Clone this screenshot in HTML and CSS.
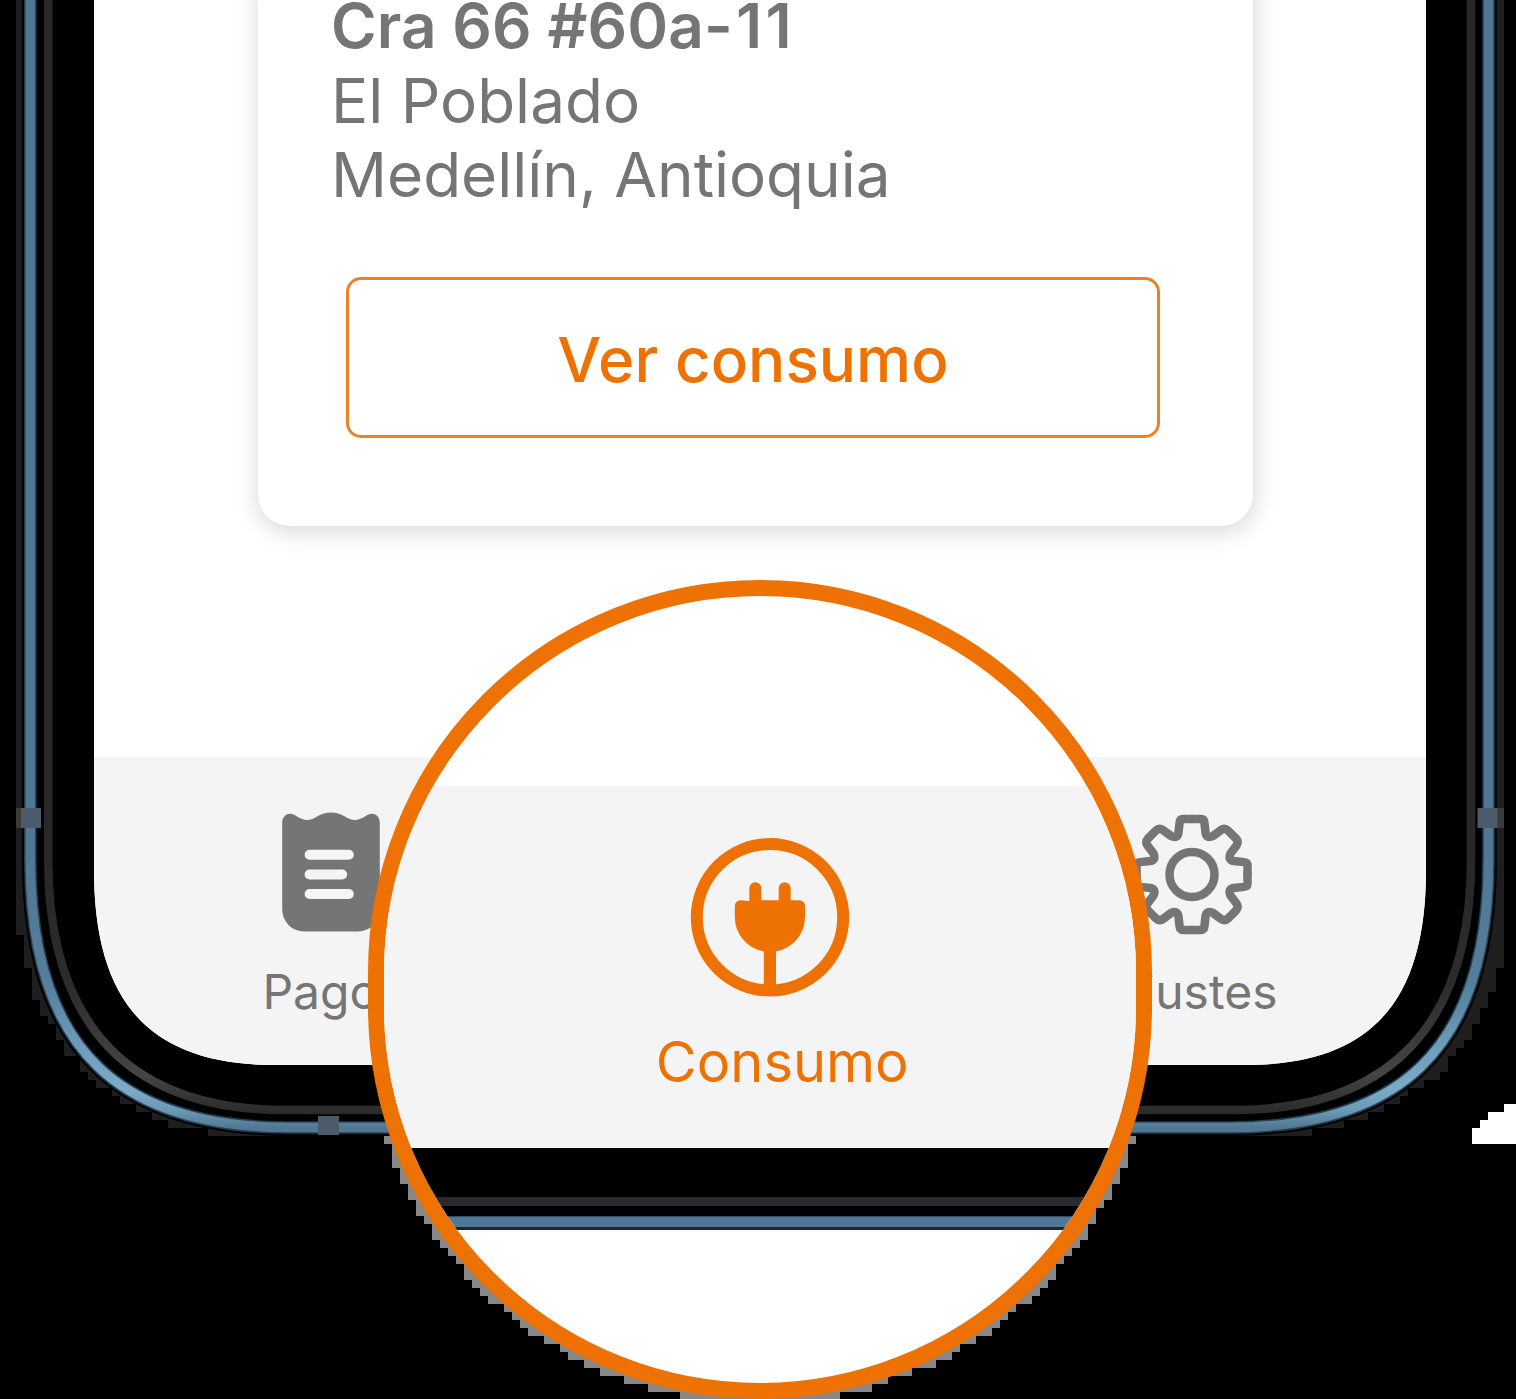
FILE: index.html
```html
<!DOCTYPE html>
<html lang="es">
<head>
  <meta charset="utf-8">
  <title>Consumo</title>
  <link rel="stylesheet" href="styles.css">
</head>
<body>
  <div class="stage">
    <svg class="frame" viewBox="0 0 1516 1399" aria-hidden="true">
      <defs>
        <linearGradient id="steel" x1="0" y1="860" x2="0" y2="1128" gradientUnits="userSpaceOnUse">
          <stop offset="0" stop-color="#507894"/>
          <stop offset=".45" stop-color="#547e9b"/>
          <stop offset=".7" stop-color="#6d9dba"/>
          <stop offset=".85" stop-color="#7babc7"/>
          <stop offset=".93" stop-color="#6c9bb8"/>
          <stop offset="1" stop-color="#507894"/>
        </linearGradient>
        <linearGradient id="rim" x1="0" y1="860" x2="0" y2="1112" gradientUnits="userSpaceOnUse">
          <stop offset="0" stop-color="#282828"/>
          <stop offset=".5" stop-color="#2c2c2c"/>
          <stop offset=".85" stop-color="#454545"/>
          <stop offset="1" stop-color="#2b2b2b"/>
        </linearGradient>
      </defs>
      <path fill="#1e1e1e" d="M16 0V935H24V968H32V1000H40V1016H48V1024H56V1040H64V1056H80V1072H88V1080H96V1088H112V1096H120V1104H136V1112H152V1120H168V1128H208V1136H1312V1128H1344V1120H1368V1112H1384V1104H1400V1096H1408V1088H1424V1080H1440V1072H1448V1056H1456V1048H1464V1040H1472V1024H1480V1008H1488V992H1496V968H1504V912V0Z"/>
      <path fill="#000" stroke="#000208" stroke-width="17" d="M30.3-20V860C30.3 1055 125 1127.500 290 1127.500H1229C1394 1127.500 1488.500 1055 1488.500 860V-20"/>
      <path fill="none" stroke="#29404f" stroke-width="12.500" d="M30.3-20V860C30.3 1055 125 1127.500 290 1127.500H1229C1394 1127.500 1488.500 1055 1488.500 860V-20"/>
      <path fill="none" stroke="url(#steel)" stroke-width="9.500" d="M30.3-20V860C30.3 1055 125 1127.500 290 1127.500H1229C1394 1127.500 1488.500 1055 1488.500 860V-20"/>
      <path fill="none" stroke="url(#rim)" stroke-width="8.500" d="M48.2-20V860C48.2 1026 131 1110 285 1110H1234C1388 1110 1471 1026 1471 860V-20"/>
      <path fill="#3a3a3a" d="M16 808H24V828H16ZM1496 808H1504V828H1496Z"/>
      <path fill="#4b5b69" d="M21 808H41V828H21ZM1477.500 808H1497.500V828H1477.500ZM318 1116H339V1135H318Z"/>
      <path fill="#888" d="M384 1136V1144H392V1168H400V1184H408V1200H416V1216H424V1224H432V1240H440V1248H448V1256H456V1264H464V1280H472V1288H480V1296H488V1304H504V1312H512V1320H520V1328H528V1336H544V1344H560V1352H568V1360H584V1368H600V1376H624V1384H648V1392H680V1399H840V1392H872V1384H888V1376H912V1368H936V1360H952V1352H960V1344H976V1336H992V1328H1000V1320H1008V1312H1016V1304H1032V1296H1040V1288H1048V1280H1056V1264H1064V1256H1072V1248H1080V1240H1088V1224H1096V1208H1104V1200H1112V1184H1120V1168H1128V1144H1136V1136Z"/>
      <path fill="#fff" d="M1516 1104H1504V1112H1488V1120H1480V1128H1472V1144H1516Z"/>
    </svg>

    <main class="screen">
      <section class="card">
        <address class="address">
          <strong class="street">Cra 66 #60a<span class="plate">-1</span>1</strong>
          <span class="district">El Poblado</span>
          <span class="city">Medellín, Antioquia</span>
        </address>
        <button class="action" type="button"><span class="action-text">Ver consumo</span></button>
      </section>

      <nav class="tabs">
        <a class="tab tab-pay">
          <svg class="tab-icon" viewBox="0 0 120 124" aria-hidden="true">
            <path fill="#757575" d="M11.200 12C11.200 4 18 .5 24.500 4.500C33 10.200 39 10.200 46 5.500C55 .3 65 .3 74 5.500C81 10.200 87 10.200 95.500 4.500C102 .5 108.800 4 108.800 12V98A22 22 0 0 1 86.800 120.500H33.200A22 22 0 0 1 11.200 98Z"/>
            <path stroke="#f5f5f5" stroke-width="10" stroke-linecap="round" d="M38.600 43.800H77.800M38.600 63.500H71.200M38.600 83H77.800"/>
          </svg>
          <span class="tab-label">Pagos</span>
        </a>
        <a class="tab tab-settings">
          <svg class="tab-icon" viewBox="-60 -63.500 120 124" aria-hidden="true">
            <defs>
              <path id="teeth" d="M0-55.500H9Q12-55.500 12.400-52L13.500-42Q14.500-35.500 21-38.500L29-44.500Q32.500-47 36-44L44-36Q47-33 44.500-29L38.500-21Q35.500-14.500 42-13.500L52-12.400Q55.500-12 55.500-9V0"/>
            </defs>
            <g fill="none" stroke="#757575" stroke-width="8.500" stroke-linecap="round">
              <circle r="22.500"/>
              <use href="#teeth"/>
              <use href="#teeth" transform="rotate(90)"/>
              <use href="#teeth" transform="rotate(180)"/>
              <use href="#teeth" transform="rotate(270)"/>
            </g>
          </svg>
          <span class="tab-label">Ajustes</span>
        </a>
      </nav>
    </main>

    <div class="lens">
      <div class="lens-tab">
        <svg class="plug" viewBox="0 0 160 160" aria-hidden="true">
          <circle cx="80" cy="80.300" r="73.200" fill="none" stroke="#ee7203" stroke-width="12"/>
          <path fill="#ee7203" d="M59.300 64V51.300a6 6 0 0 1 12 0V63.300H88.700V51.300a6 6 0 0 1 12 0V63.300H109.500a5.500 5.500 0 0 1 5.500 5.500V80A35 35 0 0 1 86 114.500V150H73.800V114.500A35 35 0 0 1 44.800 80V68.800a5.500 5.500 0 0 1 5.500-5.500Z"/>
        </svg>
        <span class="lens-label">Consumo</span>
      </div>
      <div class="lens-bezel"></div>
      <div class="lens-rim"></div>
      <div class="lens-gap"></div>
      <div class="lens-steel"></div>
    </div>
  </div>
</body>
</html>
```
FILE: styles.css
```css
body {
  margin: 0;
  background: #000;
  font-family: Inter, "Liberation Sans", sans-serif;
}

.stage {
  position: relative;
  width: 1516px;
  height: 1399px;
  overflow: hidden;
}

.frame {
  position: absolute;
  inset: 0;
  width: 1516px;
  height: 1399px;
}

.screen {
  position: relative;
  display: flex;
  flex-direction: column;
  justify-content: space-between;
  box-sizing: border-box;
  width: 1332px;
  height: 1065px;
  margin-left: 94px;
  background: #fff;
  clip-path: path("M0 0V870C0 1003 56 1065 181 1065H1151C1276 1065 1332 1003 1332 870V0Z");
}

.card {
  box-sizing: border-box;
  width: 995px;
  height: 566px;
  margin: -40px 0 0 164px;
  padding: 29px 94px 0 73px;
  border-radius: 32px;
  background: #fff;
  box-shadow: 1px 5px 24px rgba(0, 0, 0, .17);
}

.address {
  display: flex;
  flex-direction: column;
  font-style: normal;
  font-size: 62px;
  line-height: 74.500px;
  color: #757575;
  white-space: nowrap;
}

.street {
  font-weight: 600;
  letter-spacing: .1px;
}

.plate {
  letter-spacing: 3.200px;
}

.action {
  display: block;
  box-sizing: border-box;
  width: 814px;
  height: 161px;
  margin: 64.500px 0 0 15px;
  padding: 4px 0 0;
  border: 3px solid #ee8126;
  border-radius: 15px;
  background: none;
  font: 500 62px/76px Inter, "Liberation Sans", sans-serif;
  color: #ee7203;
}

.tabs {
  display: flex;
  justify-content: space-between;
  box-sizing: border-box;
  height: 308px;
  padding: 54px 134px 0 137px;
  background: #f4f4f4;
}

.tab {
  display: flex;
  flex-direction: column;
  align-items: center;
  width: 200px;
  color: #757575;
}

.tab-icon {
  width: 120px;
  height: 124px;
}

.tab-label {
  margin: 28px 0 0 4px;
  font-size: 48px;
  line-height: 58px;
}

.lens {
  position: absolute;
  left: 368px;
  top: 580px;
  box-sizing: border-box;
  width: 783.500px;
  height: 819px;
  padding-top: 190px;
  border: 16px solid #ee7203;
  border-radius: 392px;
  background: #fff;
  overflow: hidden;
}

.lens-tab {
  display: flex;
  flex-direction: column;
  align-items: center;
  box-sizing: border-box;
  height: 362px;
  padding: 51px 0 0 20px;
  background: #f4f4f4;
  color: #ee7203;
}

.plug {
  width: 160px;
  height: 160px;
}

.lens-label {
  margin: 32px 0 0 25px;
  font-size: 56px;
  line-height: 66px;
}

.lens-bezel {
  height: 49px;
  background: #000;
}

.lens-rim {
  height: 9px;
  background: #2a2a2a;
}

.lens-gap {
  height: 10px;
  background: #000208;
}

.lens-steel {
  height: 10px;
  border-top: 1px solid #334c5e;
  border-bottom: 3px solid #1a2833;
  background: #507894;
}
```
